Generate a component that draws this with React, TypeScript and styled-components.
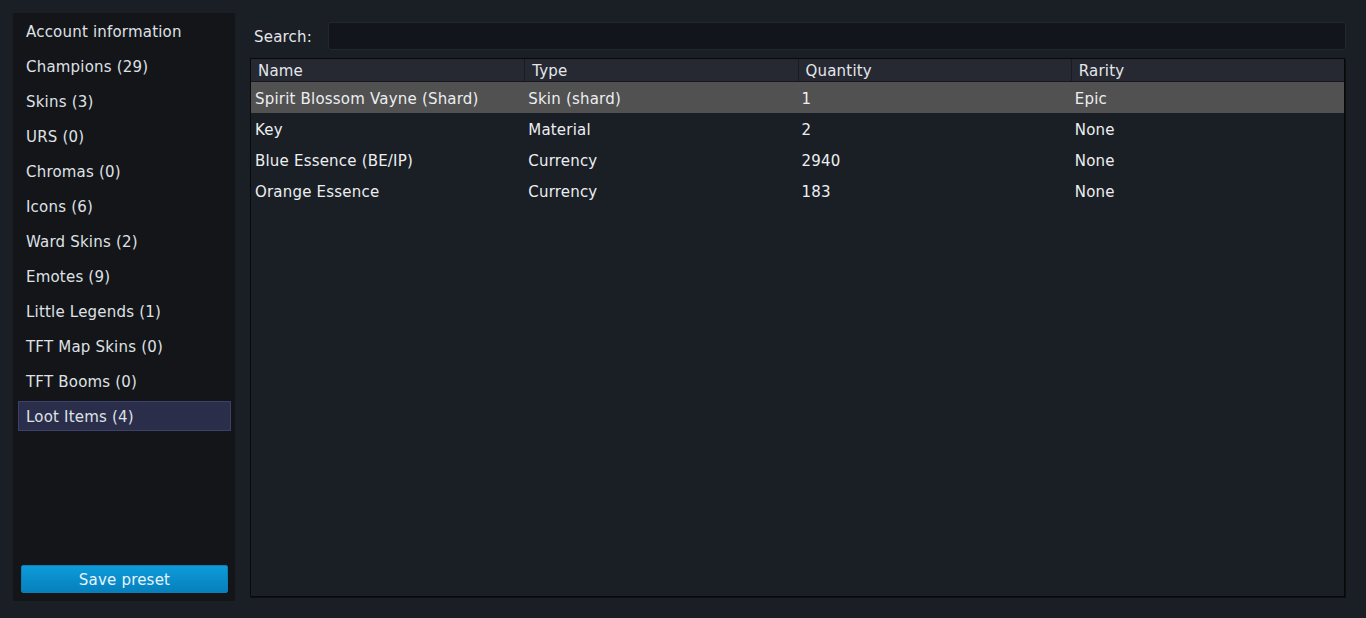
import React, { useState } from "react";
import styled, { createGlobalStyle } from "styled-components";

const GlobalStyle = createGlobalStyle`
  html, body {
    margin: 0;
    padding: 0;
    background: #1a1e25;
  }

  body {
    font-family: "DejaVu Sans", Verdana, sans-serif;
    font-size: 15px;
    letter-spacing: 0.2px;
    color: #e4e6ea;
  }
`;

const categories = [
  "Account information",
  "Champions (29)",
  "Skins (3)",
  "URS (0)",
  "Chromas (0)",
  "Icons (6)",
  "Ward Skins (2)",
  "Emotes (9)",
  "Little Legends (1)",
  "TFT Map Skins (0)",
  "TFT Booms (0)",
  "Loot Items (4)",
];

const columns = ["Name", "Type", "Quantity", "Rarity"];

const lootItems = [
  ["Spirit Blossom Vayne (Shard)", "Skin (shard)", "1", "Epic"],
  ["Key", "Material", "2", "None"],
  ["Blue Essence (BE/IP)", "Currency", "2940", "None"],
  ["Orange Essence", "Currency", "183", "None"],
];

const App: React.FC = () => {
  const [active, setActive] = useState(11);
  const [selectedRow, setSelectedRow] = useState(0);
  const [query, setQuery] = useState("");

  return (
    <>
      <GlobalStyle />
      <Layout>
        <Sidebar>
          <NavList>
            {categories.map((label, i) => (
              <NavItem
                key={label}
                active={i === active}
                onClick={() => setActive(i)}
              >
                {label}
              </NavItem>
            ))}
          </NavList>
          <SaveButton>Save preset</SaveButton>
        </Sidebar>

        <Content>
          <SearchRow>
            <SearchLabel>Search:</SearchLabel>
            <SearchInput
              value={query}
              onChange={e => setQuery(e.target.value)}
            />
          </SearchRow>

          <Table>
            <HeaderRow>
              {columns.map(col => (
                <HeaderCell key={col}>{col}</HeaderCell>
              ))}
            </HeaderRow>
            {lootItems.map((row, i) => (
              <Row
                key={row[0]}
                selected={i === selectedRow}
                onClick={() => setSelectedRow(i)}
              >
                {row.map((cell, j) => (
                  <Cell key={j}>{cell}</Cell>
                ))}
              </Row>
            ))}
          </Table>
        </Content>
      </Layout>
    </>
  );
};

const Layout = styled.div`
  display: flex;
  gap: 15px;
  height: 618px;
  box-sizing: border-box;
  padding: 13px 21px 17px 13px;
`;

const Sidebar = styled.aside`
  display: flex;
  flex-direction: column;
  justify-content: space-between;
  width: 222px;
  box-sizing: border-box;
  padding: 3px 4px 8px 5px;
  background: #141518;
`;

const NavList = styled.ul`
  display: flex;
  flex-direction: column;
  gap: 5px;
  margin: 0;
  padding: 0;
  list-style: none;
`;

const NavItem = styled.li<{ active: boolean }>`
  display: flex;
  align-items: center;
  height: 30px;
  box-sizing: border-box;
  padding: 2px 0 0 7px;
  cursor: pointer;

  color: #dfe1e6;
  border: 1px solid ${({ active }) => (active ? "#3b4168" : "transparent")};
  background: ${({ active }) => (active ? "#2a2e4a" : "transparent")};
`;

const SaveButton = styled.button`
  height: 28px;
  margin: 0 3px;
  padding: 2px 0 0;

  font-family: inherit;
  font-size: 15px;
  letter-spacing: 0.2px;
  color: #e8f4fb;

  border: 1px solid #0a7fb8;
  border-radius: 2px;
  background: linear-gradient(#0e9bd9, #0680bd);
  cursor: pointer;
`;

const Content = styled.main`
  flex: 1;
  display: flex;
  flex-direction: column;
  gap: 8px;
  padding: 9px 0 4px;
  min-width: 0;
`;

const SearchRow = styled.div`
  display: flex;
  align-items: center;
  gap: 16px;
  padding-left: 4px;
`;

const SearchLabel = styled.label`
  padding-top: 2px;
  color: #e4e6ea;
`;

const SearchInput = styled.input`
  flex: 1;
  height: 28px;
  box-sizing: border-box;
  margin-right: -1px;
  padding: 0 6px;

  font-family: inherit;
  font-size: 15px;
  color: #e4e6ea;

  border: 1px solid #23272e;
  border-radius: 2px;
  background: #12151b;
  outline: none;
`;

const Table = styled.div`
  flex: 1;
  box-sizing: border-box;
  border: 1px solid #08090b;
  box-shadow: 1px 1px 0 #0d0f12;
  background: #1a1e25;
`;

const HeaderRow = styled.div`
  display: grid;
  grid-template-columns: repeat(4, 1fr);
  height: 22px;
  background: #262932;
  border-bottom: 1px solid #15171c;
`;

const HeaderCell = styled.div`
  display: flex;
  align-items: center;
  padding: 2px 0 0 7px;
  color: #e4e6ea;

  &:not(:first-child) {
    border-left: 1px solid #1a1c22;
  }
`;

const Row = styled.div<{ selected: boolean }>`
  display: grid;
  grid-template-columns: repeat(4, 1fr);
  height: 31px;
  cursor: pointer;
  background: ${({ selected }) => (selected ? "#515151" : "transparent")};
`;

const Cell = styled.div`
  display: flex;
  align-items: center;
  padding: 2px 0 0 4px;
  color: #eceef0;
  white-space: nowrap;
  overflow: hidden;
`;

export default App;
